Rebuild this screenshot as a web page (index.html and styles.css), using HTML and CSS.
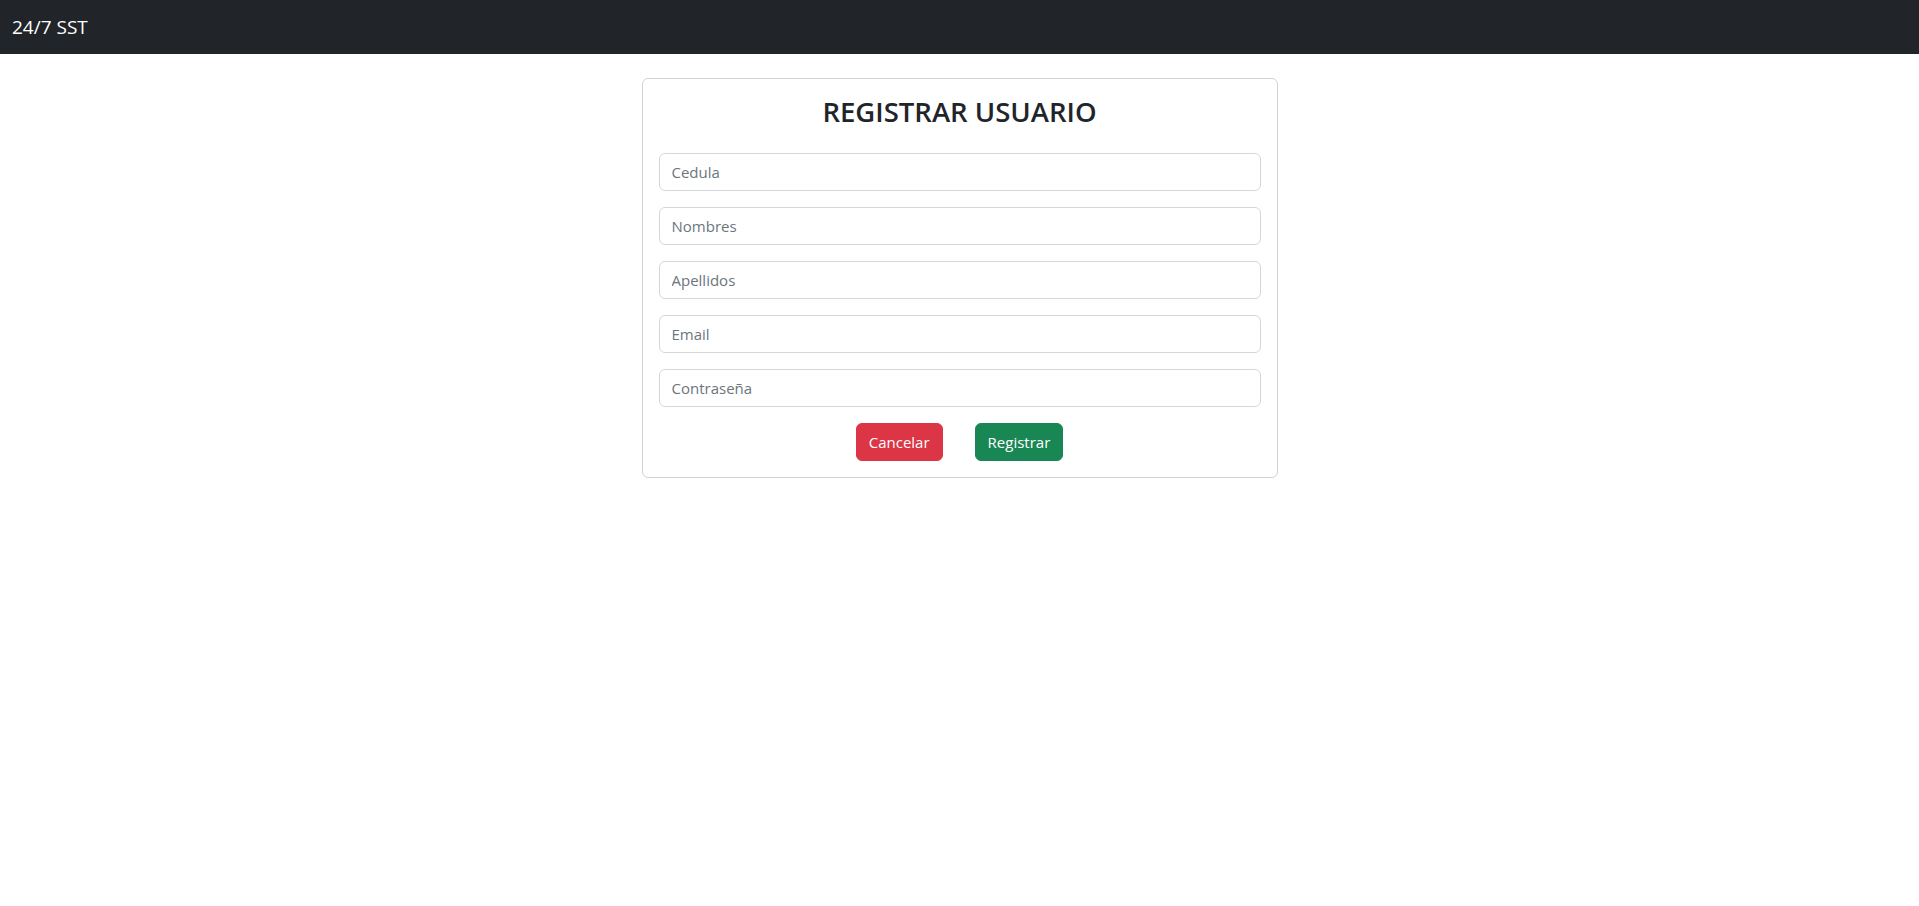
FILE: index.html
```html
<!DOCTYPE html>
<html lang="es">
<head>
<meta charset="utf-8">
<title>Registrar Usuario</title>
<link rel="stylesheet" href="styles.css">
</head>
<body>
<nav class="navbar">
  <span class="brand">24/7 SST</span>
</nav>
<main class="page">
  <div class="card">
    <h3 class="title">REGISTRAR USUARIO</h3>
    <form class="form">
      <input class="field" type="text" placeholder="Cedula">
      <input class="field" type="text" placeholder="Nombres">
      <input class="field" type="text" placeholder="Apellidos">
      <input class="field" type="email" placeholder="Email">
      <input class="field" type="password" placeholder="Contraseña">
      <div class="actions">
        <button type="button" class="btn btn-danger">Cancelar</button>
        <button type="button" class="btn btn-success">Registrar</button>
      </div>
    </form>
  </div>
</main>
</body>
</html>
```
FILE: styles.css
```css
* { box-sizing: border-box; }
html, body { margin: 0; padding: 0; }
body {
  font-family: "Open Sans", "Noto Sans", "Liberation Sans", sans-serif;
  font-size: 16px;
  color: #212529;
  background: #fff;
}
.navbar {
  height: 54px;
  background: #212529;
  display: flex;
  align-items: center;
  padding: 0 12px;
}
.brand {
  color: #fff;
  font-size: 19px;
  line-height: 1;
}
.page {
  display: flex;
  justify-content: center;
  padding-top: 24px;
}
.card {
  width: 636px;
  border: 1px solid rgba(0,0,0,0.175);
  border-radius: 6px;
  padding: 16px;
}
.title {
  margin: 0 0 24px;
  text-align: center;
  font-size: 27.5px;
  font-weight: 600;
  line-height: 34px;
}
.form {
  display: flex;
  flex-direction: column;
  gap: 16px;
}
.field {
  height: 38px;
  width: 100%;
  border: 1px solid #d4d7dc;
  border-radius: 6px;
  padding: 6px 12px;
  font-family: inherit;
  font-size: 15px;
  color: #212529;
  outline: none;
}
.field::placeholder { color: #6c757d; }
.actions {
  display: flex;
  justify-content: center;
  gap: 32px;
}
.btn {
  height: 38px;
  padding: 0 12px;
  border: 1px solid transparent;
  border-radius: 6px;
  font-family: inherit;
  font-size: 15px;
  color: #fff;
}
.btn-danger { background: #dc3545; border-color: #dc3545; }
.btn-success { background: #198754; border-color: #198754; }
```
